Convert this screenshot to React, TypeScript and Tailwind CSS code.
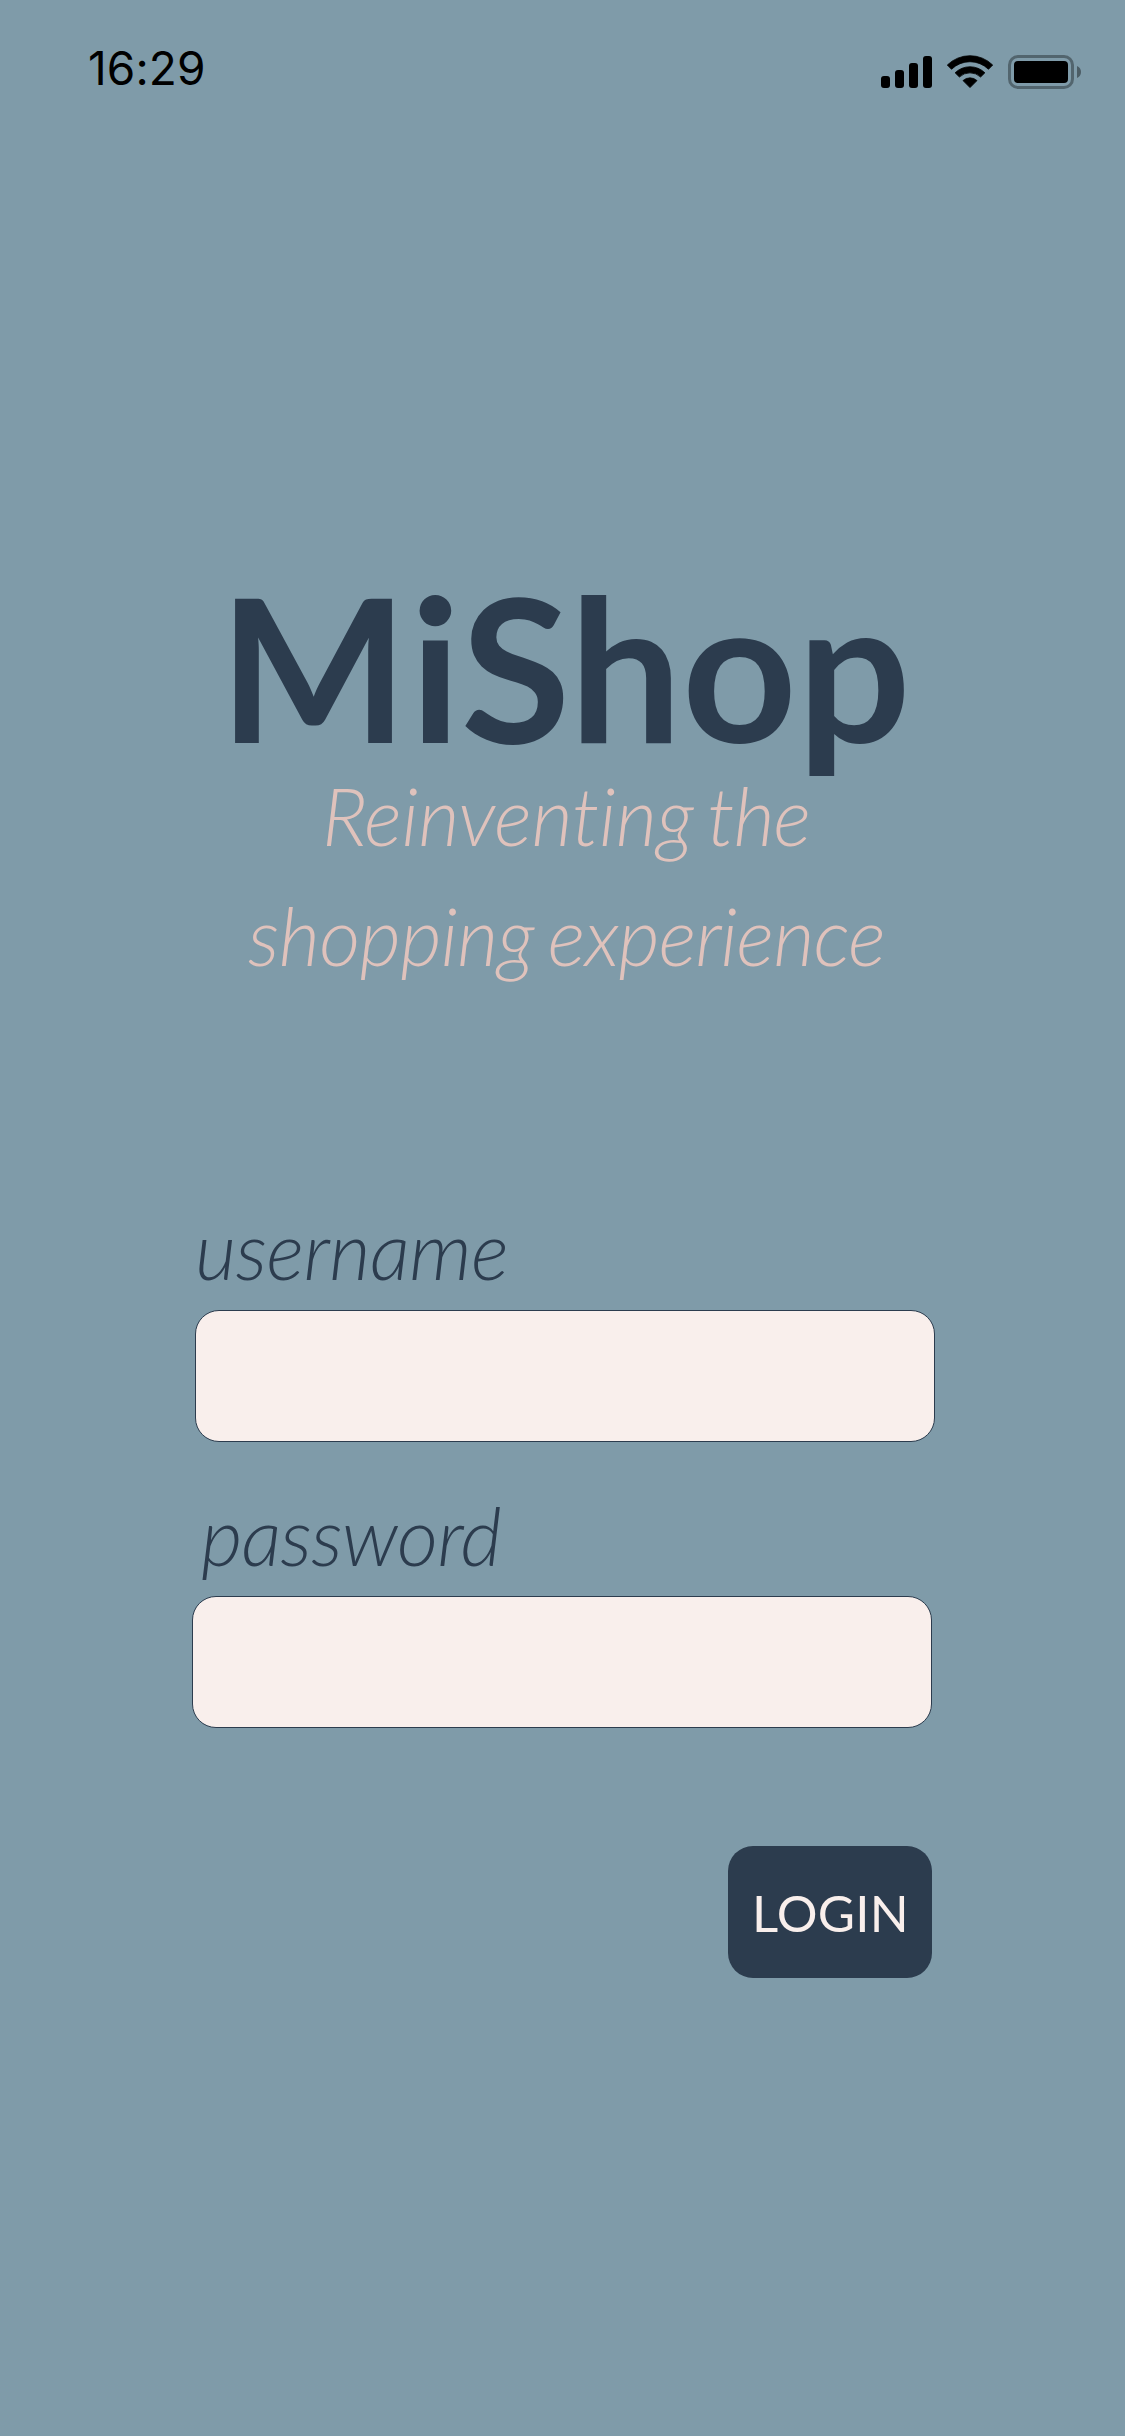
function StatusIcons() {
  return (
    <svg width="202" height="40" viewBox="20 12 202 40" className="mt-[11px]" aria-hidden="true">
      <rect x="21" y="36" width="9" height="12" rx="3" />
      <rect x="35" y="30" width="9" height="18" rx="3" />
      <rect x="49" y="23" width="9" height="25" rx="3" />
      <rect x="63" y="16" width="9" height="32" rx="3" />
      <g stroke="#000" strokeWidth="0.8" strokeLinejoin="round">
        <path d="M87.3 25 A32.4 32.4 0 0 1 132.7 25 L128.5 29.3 A26.4 26.4 0 0 0 91.5 29.3 Z" />
        <path d="M95.1 32.8 A21.4 21.4 0 0 1 124.9 32.8 L120.6 37 A15.6 15.6 0 0 0 99.4 37 Z" />
        <path d="M103 40.6 A10.3 10.3 0 0 1 117 40.6 L110 47.6 Z" />
      </g>
      <rect x="149.5" y="16.5" width="63" height="31" rx="8.5" fill="none" stroke="#000" strokeOpacity="0.35" strokeWidth="3" />
      <rect x="154" y="21" width="54" height="22" rx="4" />
      <path d="M217 26 C219.5 27 221 29.3 221 32 C221 34.7 219.5 37 217 38 Z" fillOpacity="0.4" />
    </svg>
  );
}

const fieldClass =
  'mt-[13px] block h-[132px] w-[740px] rounded-[24px] border border-[#2c3c4e] bg-[#f9efec] px-8 text-[50px] outline-none';

export default function App() {
  return (
    <main className="flex h-[2436px] w-[1125px] flex-col overflow-hidden bg-[#7f9ba9] font-['Lato',sans-serif] text-[#2c3c4e]">
      <header className="flex h-[142px] items-start justify-between pt-[41px] pr-[43px] pl-[88px] text-black">
        <span className="font-['Inter',sans-serif] text-[46px] leading-[55px] tracking-[0.1px]">16:29</span>
        <StatusIcons />
      </header>

      <section className="mt-[404px]">
        <h1 className="pl-[219px] text-[200px] leading-[240px] font-bold tracking-[0.15px]">
          <span className="tracking-[1.9px]">M</span>
          <span className="tracking-[0px]">i</span>Shop
        </h1>
        <div className="-mt-[31px] text-[80px] leading-[120px] font-light text-[#dfc2bc] italic">
          <p className="flex gap-[14px] pl-[322px]">
            <span className="tracking-[-0.3px]">Reinventing</span>
            <span className="tracking-[-1.2px]">the</span>
          </p>
          <p className="flex gap-[14px] pl-[248px]">
            <span className="tracking-[-0.7px]">shopping</span>
            <span className="tracking-[-0.93px]">experience</span>
          </p>
        </div>
      </section>

      <form className="mt-[206px] pl-[192px]" onSubmit={(e) => e.preventDefault()}>
        <div className="pl-[3px]">
          <label htmlFor="username" className="block text-[80px] leading-[96px] font-light tracking-[-0.55px] italic">
            username
          </label>
          <input id="username" type="text" className={fieldClass} />
        </div>
        <div className="mt-[45px]">
          <label htmlFor="password" className="block pl-[9px] text-[80px] leading-[96px] font-light tracking-[-0.8px] italic">
            password
          </label>
          <input id="password" type="password" className={fieldClass} />
        </div>
        <div className="mt-[118px] flex w-[740px] justify-end">
          <button
            type="submit"
            className="h-[132px] w-[204px] rounded-[25px] bg-[#2c3c4e] pt-[2px] pl-[24px] text-left text-[51px] leading-[60px] tracking-[0.2px] text-[#f9efec]"
          >
            LOGIN
          </button>
        </div>
      </form>
    </main>
  );
}
